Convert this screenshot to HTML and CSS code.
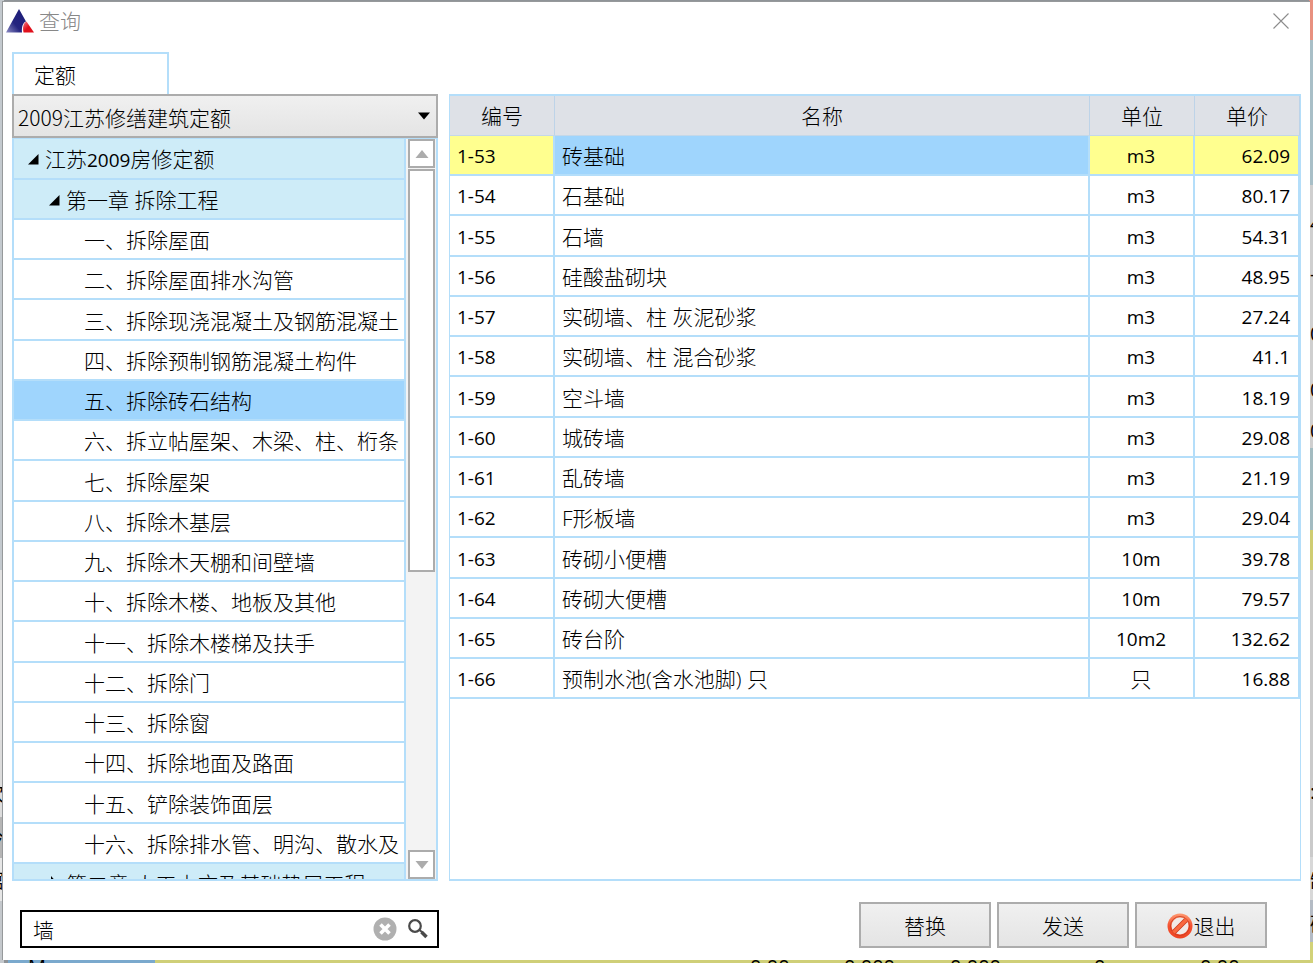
FILE: index.html
```html
<!DOCTYPE html>
<html lang="zh-CN">
<head>
<meta charset="utf-8">
<title>查询</title>
<link rel="stylesheet" href="styles.css">
</head>
<body>
<div class="backdrop" aria-hidden="true">
  <div class="edge edge-left"><span class="bit l1">坎</span><span class="bit l2">冷</span><span class="bit l3">館</span></div>
  <div class="edge edge-right"><span class="bit r1">4</span><span class="bit r2">-</span><span class="bit r3">0</span><span class="bit r4">0</span><span class="bit r5">0</span><span class="bit r6">:</span><span class="bit r7">制</span><span class="bit r8">砂</span></div>
  <div class="edge-bottom"><span class="bit b1">M</span><span class="bit b2">0.00</span><span class="bit b3">0.000</span><span class="bit b4">0.000</span><span class="bit b5">0</span><span class="bit b6">0.00</span></div>
</div>
<main class="dialog">
  <header class="titlebar">
    <svg class="logo" width="28" height="24" viewBox="0 0 28 24" aria-hidden="true">
      <defs>
        <linearGradient id="blue" x1="0" y1="1" x2="1" y2="0"><stop offset="0" stop-color="#8c8cc4"/><stop offset=".4" stop-color="#25257f"/><stop offset="1" stop-color="#1c1c78"/></linearGradient>
        <linearGradient id="red" x1="0" y1="0" x2="1" y2="1"><stop offset="0" stop-color="#f0808a"/><stop offset=".5" stop-color="#e0101c"/></linearGradient>
      </defs>
      <path d="M13 0 0 23.500h16C15.500 18 17 13.500 20 12.500Z" fill="url(#blue)"/>
      <path d="M20.500 12.500C17 14 16.500 19 17.500 23.500H28Z" fill="url(#red)"/>
    </svg>
    <h1 class="title">查询</h1>
    <button class="close" type="button" aria-label="关闭"><svg width="16" height="16" viewBox="0 0 16 16"><path d="M.5.5l15 15M15.500.5l-15 15" stroke="#8c8c8c" stroke-width="1.100"/></svg></button>
  </header>
  <div class="content">
    <section class="left">
      <button class="tab" type="button">定额</button>
      <div class="combo-wrap">
        <select class="combo" aria-label="定额库"><option>2009江苏修缮建筑定额</option></select>
        <svg class="combo-arrow" width="12" height="8" viewBox="0 0 12 8" aria-hidden="true"><path d="M0 .5h12L6 7.500Z"/></svg>
      </div>
      <div class="tree-box">
        <ul class="tree">
          <li class="group root"><svg class="tri" width="11" height="11" viewBox="0 0 11 11"><path d="M10.500 0v10.500H0Z"/></svg><span>江苏<span class="num">2009</span>房修定额</span></li>
          <li class="group chapter"><svg class="tri" width="11" height="11" viewBox="0 0 11 11"><path d="M10.500 0v10.500H0Z"/></svg>第一章 拆除工程</li>
          <li>一、拆除屋面</li>
          <li>二、拆除屋面排水沟管</li>
          <li>三、拆除现浇混凝土及钢筋混凝土</li>
          <li>四、拆除预制钢筋混凝土构件</li>
          <li class="selected">五、拆除砖石结构</li>
          <li>六、拆立帖屋架、木梁、柱、桁条</li>
          <li>七、拆除屋架</li>
          <li>八、拆除木基层</li>
          <li>九、拆除木天棚和间壁墙</li>
          <li>十、拆除木楼、地板及其他</li>
          <li>十一、拆除木楼梯及扶手</li>
          <li>十二、拆除门</li>
          <li>十三、拆除窗</li>
          <li>十四、拆除地面及路面</li>
          <li>十五、铲除装饰面层</li>
          <li>十六、拆除排水管、明沟、散水及</li>
          <li class="group chapter"><svg class="tri" width="11" height="16" viewBox="0 0 11 16"><path d="M2 0l7 8-7 8Z"/></svg>第二章 人工土方及基础垫层工程</li>
        </ul>
        <div class="scroll">
          <button class="scroll-btn" type="button" aria-label="向上"><svg width="14" height="8" viewBox="0 0 14 8"><path d="M7 0l6.500 8H.5Z" fill="#acacac"/></svg></button>
          <div class="track"><div class="thumb"></div></div>
          <button class="scroll-btn" type="button" aria-label="向下"><svg width="14" height="8" viewBox="0 0 14 8"><path d="M7 8L.5 0h13Z" fill="#acacac"/></svg></button>
        </div>
      </div>
    </section>
    <section class="right">
      <table class="grid">
        <thead><tr><th class="code">编号</th><th>名称</th><th class="unit">单位</th><th class="price">单价</th></tr></thead>
        <tbody>
          <tr class="current"><td>1-53</td><td class="name">砖基础</td><td>m3</td><td>62.09</td></tr>
          <tr><td>1-54</td><td class="name">石基础</td><td>m3</td><td>80.17</td></tr>
          <tr><td>1-55</td><td class="name">石墙</td><td>m3</td><td>54.31</td></tr>
          <tr><td>1-56</td><td class="name">硅酸盐砌块</td><td>m3</td><td>48.95</td></tr>
          <tr><td>1-57</td><td class="name">实砌墙、柱 灰泥砂浆</td><td>m3</td><td>27.24</td></tr>
          <tr><td>1-58</td><td class="name">实砌墙、柱 混合砂浆</td><td>m3</td><td>41.1</td></tr>
          <tr><td>1-59</td><td class="name">空斗墙</td><td>m3</td><td>18.19</td></tr>
          <tr><td>1-60</td><td class="name">城砖墙</td><td>m3</td><td>29.08</td></tr>
          <tr><td>1-61</td><td class="name">乱砖墙</td><td>m3</td><td>21.19</td></tr>
          <tr><td>1-62</td><td class="name">F形板墙</td><td>m3</td><td>29.04</td></tr>
          <tr><td>1-63</td><td class="name">砖砌小便槽</td><td>10m</td><td>39.78</td></tr>
          <tr><td>1-64</td><td class="name">砖砌大便槽</td><td>10m</td><td>79.57</td></tr>
          <tr><td>1-65</td><td class="name">砖台阶</td><td>10m2</td><td>132.62</td></tr>
          <tr><td>1-66</td><td class="name">预制水池(含水池脚) 只</td><td class="han">只</td><td>16.88</td></tr>
        </tbody>
      </table>
    </section>
  </div>
  <footer class="footer">
    <div class="search">
      <input class="search-input" type="text" value="墙" aria-label="查询内容">
      <button class="icon-btn" type="button" aria-label="清除"><svg width="24" height="24" viewBox="0 0 24 24"><circle cx="12" cy="12" r="11.500" fill="#b0b0b0"/><path d="M7.500 7.500l9 9M16.500 7.500l-9 9" stroke="#fff" stroke-width="3.600"/></svg></button>
      <button class="icon-btn" type="button" aria-label="搜索"><svg width="22" height="22" viewBox="0 0 22 22"><circle cx="8" cy="8" r="5.800" fill="none" stroke="#4a4a4a" stroke-width="2.200"/><path d="M12.500 12l3 2.500" stroke="#4a4a4a" stroke-width="2"/><path d="M14.500 14l5 5" stroke="#4a4a4a" stroke-width="3.600"/></svg></button>
    </div>
    <div class="actions">
      <button class="btn" type="button">替换</button>
      <button class="btn" type="button">发送</button>
      <button class="btn" type="button"><svg width="26" height="26" viewBox="0 0 26 26" aria-hidden="true">
        <defs><linearGradient id="stop" x1="0" y1="0" x2="0" y2="1"><stop offset="0" stop-color="#ff9a72"/><stop offset=".5" stop-color="#f4502f"/><stop offset="1" stop-color="#ee4423"/></linearGradient></defs>
        <circle cx="13" cy="13" r="12.500" fill="url(#stop)"/>
        <circle cx="13" cy="13" r="9.500" fill="none" stroke="#c93a1c" stroke-width=".8"/>
        <circle cx="13" cy="13" r="8.500" fill="#f1e9e6"/>
        <path d="M7 19L19 7" stroke="#c93a1c" stroke-width="5"/><path d="M6.500 19.500l13-13" stroke="#f9683f" stroke-width="3.400"/>
      </svg>退出</button>
    </div>
  </footer>
</main>
</body>
</html>
```
FILE: styles.css
```css
* { box-sizing: border-box; }

:root {
  --line: #b4defa;
  --pale: #ceecf8;
  --pick: #9fd5fd;
  --grey: #acacac;
}

body {
  margin: 0;
  height: 100vh;
  position: relative;
  display: flex;
  overflow: hidden;
  font: 300 19px/28px "Open Sans", "Noto Sans CJK SC", sans-serif;
  color: #000;
}

button, input, select { font: inherit; color: inherit; }

/* Window behind the dialog, visible only round its edges */
.backdrop {
  position: absolute;
  inset: 0;
  background: #8f9498;
  font-size: 20px;
  font-weight: 400;
}
.edge { position: absolute; top: 0; bottom: 0; width: 4px; overflow: hidden; }
.edge-left {
  left: 0;
  background: linear-gradient(#c3c9ce 570px, #e2e2e2 570px 740px, #dcdcdc 740px 817px, #b5b5b5 817px 858px, #e6e6e6 858px 901px, #c4c8cc 901px);
}
.edge-right {
  right: 0;
  background: linear-gradient(#e8907f 40px, #a8bfc7 40px 185px, #cfcfcf 185px 448px, #a3bbc0 448px 530px, #cfcd72 530px 570px, #cacaca 570px 857px, #d8d8d8 857px 900px, #b4bbc4 900px 942px, #d2d278 942px);
}
.edge-bottom {
  position: absolute;
  left: 8px;
  right: 3px;
  bottom: 0;
  height: 3px;
  overflow: hidden;
  background: linear-gradient(90deg, #7aa9cd 147px, #cfcf78 147px);
}
.bit { position: absolute; left: 0; }
.edge-left .bit { left: -16px; }
.edge-right .bit { left: 1px; }
.l1 { top: 780px; }
.l2 { top: 825px; }
.l3 { top: 867px; }
.r1 { top: 210px; }
.r2 { top: 260px; }
.r3 { top: 320px; }
.r4 { top: 376px; }
.r5 { top: 417px; }
.r6 { top: 778px; }
.r7 { top: 868px; }
.r8 { top: 911px; }
.edge-bottom .bit { top: -7px; }
.edge-bottom .b1 { left: 20px; }
.edge-bottom .b2 { left: 742px; }
.edge-bottom .b3 { left: 836px; }
.edge-bottom .b4 { left: 942px; }
.edge-bottom .b5 { left: 1086px; }
.edge-bottom .b6 { left: 1192px; }

.dialog {
  position: relative;
  flex: 1;
  display: flex;
  flex-direction: column;
  margin: 1px 3px 3px 2px;
  border: 1px solid #96999b;
  border-right: 0;
  border-bottom: 0;
  background: #fff;
}

.titlebar {
  display: flex;
  align-items: center;
  gap: 5px;
  height: 38px;
  padding: 0 21px 0 3px;
}
.title { flex: 1; margin: 0; font-size: 21px; font-weight: 300; color: #888; }
.close { display: flex; padding: 0; border: 0; background: none; }

.content {
  flex: 1;
  min-height: 0;
  display: flex;
  gap: 11px;
  padding: 12px 9px 0;
}
.left { flex: 0 0 426px; display: flex; flex-direction: column; min-height: 0; }

.tab {
  width: 157px;
  height: 42px;
  padding: 2px 0 0 20px;
  border: 2px solid var(--line);
  border-bottom: 0;
  background: #fff;
  font-size: 21px;
  text-align: left;
}
.combo-wrap { position: relative; }
.combo {
  display: block;
  width: 100%;
  height: 44px;
  padding: 2px 4px 0;
  border: 2px solid var(--grey);
  border-radius: 0;
  background: linear-gradient(#f0f0f0, #e4e4e4);
  font-family: "Noto Sans CJK SC", sans-serif;
  font-size: 21px;
  appearance: none;
}
.combo-arrow { position: absolute; right: 8px; top: 18px; pointer-events: none; }

.tree-box {
  flex: 1;
  min-height: 0;
  display: flex;
  border: 2px solid var(--line);
  border-top: 1px solid var(--line);
}
.tree {
  flex: 1;
  min-width: 0;
  margin: 0;
  padding: 0;
  overflow: hidden;
  list-style: none;
  border-right: 2px solid var(--line);
  font-size: 21px;
}
.tree li {
  display: flex;
  align-items: center;
  height: 40px;
  padding: 2px 0 0 70px;
  border-bottom: 2px solid var(--line);
  white-space: pre;
}
.tree li:nth-child(4n+5) { height: 41px; }
.tree .group { gap: 6px; background: var(--pale); }
.tree .root { padding-left: 14px; height: 41px; }
.tree .chapter { padding-left: 35px; }
.tree .selected { background: var(--pick); }
.num { font-size: 19px; font-weight: 400; }

.scroll {
  display: flex;
  flex-direction: column;
  flex: 0 0 30px;
  padding: 0 1px 0 2px;
  background: #f3f3f3;
}
.scroll-btn {
  display: flex;
  align-items: center;
  justify-content: center;
  height: 29px;
  padding: 0;
  border: 2px solid var(--grey);
  background: #fff;
}
.track { flex: 1; padding-top: 1px; }
.thumb { height: 59.200%; border: 2px solid var(--grey); background: #fff; }

.right {
  flex: 1;
  min-width: 0;
  margin-top: 42px;
  border: 2px solid var(--line);
  border-width: 2px 1px;
}
.grid {
  width: 100%;
  table-layout: fixed;
  border-collapse: separate;
  border-spacing: 0;
}
.grid th {
  height: 40px;
  padding: 0;
  border-right: 1px solid #bdd3e8;
  border-bottom: 1px solid #c5d8e8;
  background: #dee1e7;
  font-size: 21px;
  font-weight: 300;
}
.grid .code { width: 105px; }
.grid .unit, .grid .price { width: 105px; }
.grid td {
  height: 40px;
  padding: 2px 8px 0 7px;
  border-right: 2px solid var(--line);
  border-bottom: 2px solid var(--line);
  font-weight: 400;
}
.grid tr:nth-child(4n+3) td { height: 41px; }
.grid .name, .grid .han { font-size: 21px; font-weight: 300; }
.grid td:nth-child(3) { text-align: center; }
.grid td:nth-child(4) { text-align: right; }
.grid .current td { background: #ffff8f; }
.grid .current .name { background: var(--pick); }

.footer {
  display: flex;
  justify-content: space-between;
  align-items: flex-start;
  padding: 21px 43px 12px 17px;
}
.search {
  display: flex;
  align-items: center;
  gap: 10px;
  width: 419px;
  height: 38px;
  margin-top: 8px;
  padding-right: 8px;
  border: 2px solid #000;
}
.search-input {
  flex: 1;
  min-width: 0;
  height: 34px;
  padding: 0 11px;
  border: 0;
  outline: 0;
  background: none;
  font-size: 21px;
}
.icon-btn { display: flex; padding: 0; border: 0; background: none; }
.actions { display: flex; gap: 6px; }
.btn {
  display: flex;
  align-items: center;
  justify-content: center;
  gap: 1px;
  width: 132px;
  height: 46px;
  padding: 2px 0 0;
  border: 2px solid var(--grey);
  background: linear-gradient(#f0f0f0, #e4e4e4);
  font-size: 21px;
}
```
